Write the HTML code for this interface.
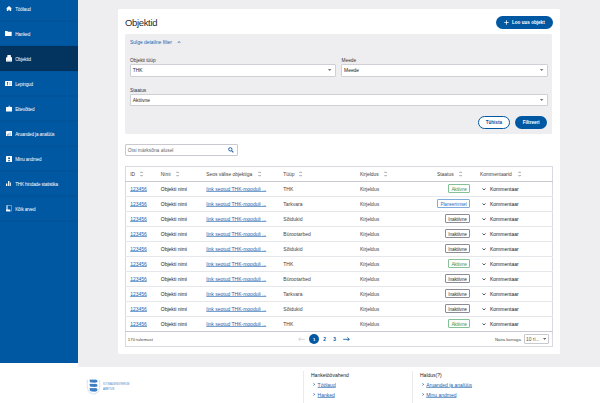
<!DOCTYPE html>
<html><head><meta charset="utf-8"><title>Objektid</title>
<style>
html,body{margin:0;padding:0;}
body{width:600px;height:403px;overflow:hidden;position:relative;background:#fff;font-family:"Liberation Sans",sans-serif;}
.t{position:absolute;white-space:nowrap;}
.b{position:absolute;}
.ic{position:absolute;display:block;}
.ic svg{display:block;}
</style></head><body>
<div class="b" style="left:0px;top:0px;width:77.50px;height:362.50px;background:#0058a3"></div>
<div class="b" style="left:0px;top:46px;width:77.50px;height:25.00px;background:#03345f"></div>
<div class="b" style="left:0px;top:20px;width:77.50px;height:2.00px;background:rgba(0,0,0,0.04)"></div>
<div class="b" style="left:0px;top:45px;width:77.50px;height:2.00px;background:rgba(0,0,0,0.04)"></div>
<div class="b" style="left:0px;top:70px;width:77.50px;height:2.00px;background:rgba(0,0,0,0.04)"></div>
<div class="b" style="left:0px;top:95px;width:77.50px;height:2.00px;background:rgba(0,0,0,0.04)"></div>
<div class="b" style="left:0px;top:120px;width:77.50px;height:2.00px;background:rgba(0,0,0,0.04)"></div>
<div class="b" style="left:0px;top:145px;width:77.50px;height:2.00px;background:rgba(0,0,0,0.04)"></div>
<div class="b" style="left:0px;top:170px;width:77.50px;height:2.00px;background:rgba(0,0,0,0.04)"></div>
<div class="b" style="left:0px;top:195px;width:77.50px;height:2.00px;background:rgba(0,0,0,0.04)"></div>
<div class="b" style="left:0px;top:220px;width:77.50px;height:2.00px;background:rgba(0,0,0,0.04)"></div>
<div class="ic" style="left:5.8px;top:5.8px;width:6.0px;height:5.4px;"><svg width="6" height="5.4" viewBox="0 0 12 11"><path d="M6 0 L12 5.2 L10.4 5.2 L10.4 11 L7.4 11 L7.4 7.6 L4.6 7.6 L4.6 11 L1.6 11 L1.6 5.2 L0 5.2 Z" fill="#ffffff"/></svg></div>
<div class="t " style="left:15.2px;top:4.80px;height:10px;line-height:10px;font-size:4.6px;color:#fff;font-weight:400;letter-spacing:-0.15px">Töölaud</div>
<div class="ic" style="left:5.4px;top:31.0px;width:6.7px;height:4.9px;"><svg width="6.7" height="4.9" viewBox="0 0 13.4 9.8"><path d="M0 0.6 Q0 0 0.6 0 H4.6 L6 1.4 H12.8 Q13.4 1.4 13.4 2 V9.2 Q13.4 9.8 12.8 9.8 H0.6 Q0 9.8 0 9.2 Z" fill="#ffffff"/></svg></div>
<div class="t " style="left:15.2px;top:29.80px;height:10px;line-height:10px;font-size:4.6px;color:#fff;font-weight:400;letter-spacing:-0.15px">Hanked</div>
<div class="ic" style="left:5.8px;top:55.3px;width:6.3px;height:6.6px;"><svg width="6.3" height="6.6" viewBox="0 0 12.6 13.2"><path d="M1.4 4.4 H2.6 V1.2 Q2.6 0 3.8 0 H8.6 Q9.8 0 9.8 1.2 V4.4 H11.2 Q12.6 4.4 12.6 5.8 V13.2 H0 V5.8 Q0 4.4 1.4 4.4 Z" fill="#ffffff"/><path d="M2.2 13.2 V10.4 Q3.6 8.6 5 10.4 V13.2 Z M7.6 13.2 V10.4 Q9 8.6 10.4 10.4 V13.2 Z" fill="#c9d6e6"/></svg></div>
<div class="t " style="left:15.2px;top:54.80px;height:10px;line-height:10px;font-size:4.6px;color:#fff;font-weight:400;letter-spacing:-0.15px">Objektid</div>
<div class="ic" style="left:5.0px;top:80.8px;width:7.4px;height:5.2px;"><svg width="7.4" height="5.2" viewBox="0 0 14.8 10.4"><rect x="0" y="0" width="14.8" height="10.4" rx="0.8" fill="#ffffff"/><circle cx="5" cy="3.6" r="1.5" fill="#0058a3"/><rect x="4.3" y="4.6" width="1.4" height="4" fill="#0058a3"/><rect x="9.2" y="2" width="0.9" height="6.4" fill="#0058a3" opacity="0.5"/><rect x="11.4" y="2" width="0.9" height="6.4" fill="#0058a3" opacity="0.5"/></svg></div>
<div class="t " style="left:15.2px;top:79.80px;height:10px;line-height:10px;font-size:4.6px;color:#fff;font-weight:400;letter-spacing:-0.15px">Lepingud</div>
<div class="ic" style="left:5.5px;top:105.1px;width:6.6px;height:6.6px;"><svg width="6.6" height="6.6" viewBox="0 0 13.2 13.2"><path d="M0.6 4 H12.6 Q13.2 4 13.2 4.6 V12.6 Q13.2 13.2 12.6 13.2 H0.6 Q0 13.2 0 12.6 V4.6 Q0 4 0.6 4 Z" fill="#ffffff"/><path d="M4 4 L6.6 0.4 L9.2 4 Z" fill="#9fbce0"/></svg></div>
<div class="t " style="left:15.2px;top:104.80px;height:10px;line-height:10px;font-size:4.6px;color:#fff;font-weight:400;letter-spacing:-0.15px">Ettevõtted</div>
<div class="ic" style="left:5.8px;top:130.8px;width:6.1px;height:5.7px;"><svg width="6.1" height="5.7" viewBox="0 0 12.2 11.4"><rect x="0" y="0" width="12.2" height="11.4" rx="1" fill="#ffffff"/><rect x="2" y="6.4" width="2" height="3" fill="#6f9bd0"/><rect x="4.8" y="4.4" width="2" height="5" fill="#6f9bd0"/><rect x="7.6" y="2.4" width="2" height="7" fill="#a9c3e3"/></svg></div>
<div class="t " style="left:15.2px;top:129.80px;height:10px;line-height:10px;font-size:4.6px;color:#fff;font-weight:400;letter-spacing:-0.15px">Aruanded ja analüüs</div>
<div class="ic" style="left:5.8px;top:155.5px;width:6.1px;height:6.4px;"><svg width="6.1" height="6.4" viewBox="0 0 12.2 12.8"><rect x="0" y="0" width="12.2" height="12.8" rx="1" fill="#ffffff"/><circle cx="6.1" cy="4.4" r="2" fill="#0058a3"/><path d="M3.4 10.4 Q6.1 5.2 8.8 10.4 Z" fill="#0058a3"/></svg></div>
<div class="t " style="left:15.2px;top:154.80px;height:10px;line-height:10px;font-size:4.6px;color:#fff;font-weight:400;letter-spacing:-0.15px">Minu andmed</div>
<div class="ic" style="left:5.8px;top:180.8px;width:5.6px;height:5.4px;"><svg width="5.6" height="5.4" viewBox="0 0 11.2 10.8"><rect x="0" y="5" width="2.6" height="5.8" fill="#ffffff"/><rect x="4.2" y="0" width="2.6" height="10.8" fill="#ffffff"/><rect x="8.4" y="3" width="2.6" height="7.8" fill="#ffffff"/></svg></div>
<div class="t " style="left:15.2px;top:179.80px;height:10px;line-height:10px;font-size:4.6px;color:#fff;font-weight:400;letter-spacing:-0.15px">THK hindade statistika</div>
<div class="ic" style="left:5.8px;top:205.3px;width:6.1px;height:6.4px;"><svg width="6.1" height="6.4" viewBox="0 0 12.2 12.8"><rect x="0.7" y="0.7" width="10.8" height="11.4" rx="1" stroke="#c3d3e8" stroke-width="1.2" fill="none"/><rect x="1.5" y="1" width="1.6" height="9" fill="#ffffff"/><rect x="0" y="9" width="8.5" height="3.6" rx="1" fill="#ffffff"/></svg></div>
<div class="t " style="left:15.2px;top:204.80px;height:10px;line-height:10px;font-size:4.6px;color:#fff;font-weight:400;letter-spacing:-0.15px">Kõik arved</div>
<div class="b" style="left:77.5px;top:0px;width:522.50px;height:366.50px;background:#eeeef0"></div>
<div class="b" style="left:117.5px;top:9px;width:442.50px;height:344.50px;background:#fff;border-radius:1.5px"></div>
<div class="t " style="left:125.1px;top:16.20px;height:14px;line-height:14px;font-size:9.5px;color:#2a2a2a;font-weight:400;letter-spacing:-0.36px">Objektid</div>
<div class="b" style="left:495.6px;top:16px;width:57.00px;height:12.60px;background:#0058a3;border-radius:7px"></div>
<svg class="ic" style="left:504.2px;top:19.8px" width="5" height="5" viewBox="0 0 10 10"><path d="M5 0.5 V9.5 M0.5 5 H9.5" stroke="#fff" stroke-width="1.5"/></svg>
<div class="t " style="left:512px;top:18.10px;height:10px;line-height:10px;font-size:4.6px;color:#fff;font-weight:700;">Loo uus objekt</div>
<div class="b" style="left:125px;top:34px;width:427.40px;height:99.60px;background:#eeeef0;border-radius:1.5px"></div>
<div class="t " style="left:130px;top:38.00px;height:10px;line-height:10px;font-size:4.95px;color:#1f63ad;font-weight:400;">Sulge detailne filter</div>
<svg class="ic" style="left:177px;top:40.8px" width="4.2" height="2.6" viewBox="0 0 8.4 5.2"><path d="M1 4.3 L4.2 1.2 L7.4 4.3" stroke="#1f63ad" stroke-width="1.6" fill="none"/></svg>
<div class="t " style="left:130px;top:55.80px;height:10px;line-height:10px;font-size:4.8px;color:#333;font-weight:400;">Objekti tüüp</div>
<div class="b" style="left:129.8px;top:63.9px;width:205.90px;height:12.70px;background:#fff;border:0.5px solid #cfd0d6;box-sizing:border-box;border-radius:1px"></div>
<div class="t " style="left:132.8px;top:66.05px;height:10px;line-height:10px;font-size:4.9px;color:#222;font-weight:400;">THK</div>
<svg class="ic" style="left:328.20px;top:69.45px" width="3.4" height="2" viewBox="0 0 5 3"><path d="M0 0 H5 L2.5 3 Z" fill="#6b6b73"/></svg>
<div class="t " style="left:341.5px;top:55.80px;height:10px;line-height:10px;font-size:4.8px;color:#333;font-weight:400;">Meede</div>
<div class="b" style="left:341.1px;top:63.9px;width:206.60px;height:12.70px;background:#fff;border:0.5px solid #cfd0d6;box-sizing:border-box;border-radius:1px"></div>
<div class="t " style="left:344.1px;top:66.05px;height:10px;line-height:10px;font-size:4.9px;color:#222;font-weight:400;">Meede</div>
<svg class="ic" style="left:540.20px;top:69.45px" width="3.4" height="2" viewBox="0 0 5 3"><path d="M0 0 H5 L2.5 3 Z" fill="#6b6b73"/></svg>
<div class="t " style="left:130px;top:85.80px;height:10px;line-height:10px;font-size:4.8px;color:#333;font-weight:400;">Staatus</div>
<div class="b" style="left:129.8px;top:93.6px;width:417.90px;height:12.80px;background:#fff;border:0.5px solid #cfd0d6;box-sizing:border-box;border-radius:1px"></div>
<div class="t " style="left:132.8px;top:95.80px;height:10px;line-height:10px;font-size:4.9px;color:#222;font-weight:400;">Aktiivne</div>
<svg class="ic" style="left:540.20px;top:99.20px" width="3.4" height="2" viewBox="0 0 5 3"><path d="M0 0 H5 L2.5 3 Z" fill="#6b6b73"/></svg>
<div class="b" style="left:477.9px;top:116px;width:31.90px;height:12.60px;background:#fff;border:0.6px solid #0058a3;box-sizing:border-box;border-radius:7px"></div>
<div class="t " style="left:477.9px;top:118.10px;height:10px;line-height:10px;font-size:4.6px;color:#0058a3;font-weight:700;width:31.9px;text-align:center">Tühista</div>
<div class="b" style="left:514.9px;top:116px;width:32.60px;height:12.60px;background:#0058a3;border-radius:7px"></div>
<div class="t " style="left:514.9px;top:118.10px;height:10px;line-height:10px;font-size:4.6px;color:#fff;font-weight:700;width:32.6px;text-align:center">Filtreeri</div>
<div class="b" style="left:125px;top:143.7px;width:112.50px;height:12.40px;background:#fff;border:0.5px solid #c9cad0;box-sizing:border-box;border-radius:1px"></div>
<div class="t " style="left:127.8px;top:145.70px;height:10px;line-height:10px;font-size:4.9px;color:#666;font-weight:400;">Otsi märksõna alusel</div>
<svg class="ic" style="left:228.2px;top:146.8px" width="5.8" height="5.8" viewBox="0 0 10 10"><circle cx="4" cy="4" r="2.9" stroke="#1f63ad" stroke-width="1.7" fill="none"/><path d="M6.1 6.1 L9.2 9.2" stroke="#1f63ad" stroke-width="2"/></svg>
<div class="b" style="left:125px;top:166.2px;width:427.50px;height:180.40px;background:#fff;border:0.5px solid #d9dae0;box-sizing:border-box"></div>
<div class="b" style="left:125px;top:180.9px;width:427.50px;height:0.70px;background:#c8c9d2"></div>
<div class="b" style="left:125px;top:195.89999999999998px;width:427.50px;height:0.60px;background:#e6e7eb"></div>
<div class="b" style="left:125px;top:210.89999999999998px;width:427.50px;height:0.60px;background:#e6e7eb"></div>
<div class="b" style="left:125px;top:225.89999999999998px;width:427.50px;height:0.60px;background:#e6e7eb"></div>
<div class="b" style="left:125px;top:240.89999999999998px;width:427.50px;height:0.60px;background:#e6e7eb"></div>
<div class="b" style="left:125px;top:255.89999999999998px;width:427.50px;height:0.60px;background:#e6e7eb"></div>
<div class="b" style="left:125px;top:270.9px;width:427.50px;height:0.60px;background:#e6e7eb"></div>
<div class="b" style="left:125px;top:285.9px;width:427.50px;height:0.60px;background:#e6e7eb"></div>
<div class="b" style="left:125px;top:300.9px;width:427.50px;height:0.60px;background:#e6e7eb"></div>
<div class="b" style="left:125px;top:315.9px;width:427.50px;height:0.60px;background:#e6e7eb"></div>
<div class="b" style="left:125px;top:330.7px;width:427.50px;height:0.70px;background:#c8c9d2"></div>
<div class="t " style="left:130.2px;top:169.80px;height:10px;line-height:10px;font-size:4.9px;color:#444;font-weight:400;">ID</div>
<svg class="ic" style="left:140.00px;top:171.00px" width="3.2" height="6" viewBox="0 0 6.4 12"><path d="M1 4 L3.2 1.6 L5.4 4 M1 8 L3.2 10.4 L5.4 8" stroke="#666" stroke-width="1.3" fill="none"/></svg>
<div class="t " style="left:160.8px;top:169.80px;height:10px;line-height:10px;font-size:4.9px;color:#444;font-weight:400;">Nimi</div>
<svg class="ic" style="left:176.00px;top:171.00px" width="3.2" height="6" viewBox="0 0 6.4 12"><path d="M1 4 L3.2 1.6 L5.4 4 M1 8 L3.2 10.4 L5.4 8" stroke="#666" stroke-width="1.3" fill="none"/></svg>
<div class="t " style="left:206.2px;top:169.80px;height:10px;line-height:10px;font-size:4.9px;color:#444;font-weight:400;">Seos välise objektiga</div>
<svg class="ic" style="left:257.50px;top:171.00px" width="3.2" height="6" viewBox="0 0 6.4 12"><path d="M1 4 L3.2 1.6 L5.4 4 M1 8 L3.2 10.4 L5.4 8" stroke="#666" stroke-width="1.3" fill="none"/></svg>
<div class="t " style="left:283.3px;top:169.80px;height:10px;line-height:10px;font-size:4.9px;color:#444;font-weight:400;">Tüüp</div>
<svg class="ic" style="left:298.60px;top:171.00px" width="3.2" height="6" viewBox="0 0 6.4 12"><path d="M1 4 L3.2 1.6 L5.4 4 M1 8 L3.2 10.4 L5.4 8" stroke="#666" stroke-width="1.3" fill="none"/></svg>
<div class="t " style="left:360px;top:169.80px;height:10px;line-height:10px;font-size:4.9px;color:#444;font-weight:400;">Kirjeldus</div>
<svg class="ic" style="left:384.20px;top:171.00px" width="3.2" height="6" viewBox="0 0 6.4 12"><path d="M1 4 L3.2 1.6 L5.4 4 M1 8 L3.2 10.4 L5.4 8" stroke="#666" stroke-width="1.3" fill="none"/></svg>
<div class="t " style="left:437px;top:169.80px;height:10px;line-height:10px;font-size:4.9px;color:#444;font-weight:400;">Staatus</div>
<svg class="ic" style="left:459.00px;top:171.00px" width="3.2" height="6" viewBox="0 0 6.4 12"><path d="M1 4 L3.2 1.6 L5.4 4 M1 8 L3.2 10.4 L5.4 8" stroke="#666" stroke-width="1.3" fill="none"/></svg>
<div class="t " style="left:480px;top:169.80px;height:10px;line-height:10px;font-size:4.9px;color:#444;font-weight:400;">Kommentaarid</div>
<svg class="ic" style="left:518.00px;top:171.00px" width="3.2" height="6" viewBox="0 0 6.4 12"><path d="M1 4 L3.2 1.6 L5.4 4 M1 8 L3.2 10.4 L5.4 8" stroke="#666" stroke-width="1.3" fill="none"/></svg>
<div class="t " style="left:130.2px;top:183.90px;height:10px;line-height:10px;font-size:5px;color:#1f63ad;font-weight:400;text-decoration:underline;text-decoration-thickness:0.3px;text-underline-offset:0.3px;text-decoration-color:rgba(31,99,173,0.6)">123456</div>
<div class="t " style="left:160.8px;top:183.90px;height:10px;line-height:10px;font-size:5px;color:#222;font-weight:400;">Objekti nimi</div>
<div class="t " style="left:206.3px;top:183.90px;height:10px;line-height:10px;font-size:5px;color:#1f63ad;font-weight:400;text-decoration:underline;text-decoration-thickness:0.3px;text-underline-offset:0.3px;text-decoration-color:rgba(31,99,173,0.6)">link seotud THK-mooduli ...</div>
<div class="t " style="left:283.3px;top:183.90px;height:10px;line-height:10px;font-size:5px;color:#444;font-weight:400;">THK</div>
<div class="t " style="left:360px;top:183.90px;height:10px;line-height:10px;font-size:5px;color:#444;font-weight:400;">Kirjeldus</div>
<div class="b" style="left:448px;top:184.2px;width:22.00px;height:9.30px;background:#fff;border:0.6px solid #86c096;box-sizing:border-box;border-radius:1px"></div>
<div class="t " style="left:448px;top:184.50px;height:10px;line-height:10px;font-size:4.7px;color:#3f9656;font-weight:400;width:22.00px;text-align:center;letter-spacing:-0.15px">Aktiivne</div>
<svg class="ic" style="left:482px;top:187.60px" width="4" height="2.4" viewBox="0 0 8 5"><path d="M1 1 L4 4 L7 1" stroke="#222" stroke-width="1.8" fill="none"/></svg>
<div class="t " style="left:490px;top:183.90px;height:10px;line-height:10px;font-size:5px;color:#222;font-weight:400;">Kommentaar</div>
<div class="t " style="left:130.2px;top:198.90px;height:10px;line-height:10px;font-size:5px;color:#1f63ad;font-weight:400;text-decoration:underline;text-decoration-thickness:0.3px;text-underline-offset:0.3px;text-decoration-color:rgba(31,99,173,0.6)">123456</div>
<div class="t " style="left:160.8px;top:198.90px;height:10px;line-height:10px;font-size:5px;color:#222;font-weight:400;">Objekti nimi</div>
<div class="t " style="left:206.3px;top:198.90px;height:10px;line-height:10px;font-size:5px;color:#1f63ad;font-weight:400;text-decoration:underline;text-decoration-thickness:0.3px;text-underline-offset:0.3px;text-decoration-color:rgba(31,99,173,0.6)">link seotud THK-mooduli ...</div>
<div class="t " style="left:283.3px;top:198.90px;height:10px;line-height:10px;font-size:5px;color:#444;font-weight:400;">Tarkvara</div>
<div class="t " style="left:360px;top:198.90px;height:10px;line-height:10px;font-size:5px;color:#444;font-weight:400;">Kirjeldus</div>
<div class="b" style="left:437.2px;top:199.2px;width:32.80px;height:9.30px;background:#fff;border:0.6px solid #7fabdc;box-sizing:border-box;border-radius:1px"></div>
<div class="t " style="left:437.2px;top:199.50px;height:10px;line-height:10px;font-size:4.7px;color:#2f78c8;font-weight:400;width:32.80px;text-align:center;letter-spacing:-0.15px">Planeerimisel</div>
<svg class="ic" style="left:482px;top:202.60px" width="4" height="2.4" viewBox="0 0 8 5"><path d="M1 1 L4 4 L7 1" stroke="#222" stroke-width="1.8" fill="none"/></svg>
<div class="t " style="left:490px;top:198.90px;height:10px;line-height:10px;font-size:5px;color:#222;font-weight:400;">Kommentaar</div>
<div class="t " style="left:130.2px;top:213.90px;height:10px;line-height:10px;font-size:5px;color:#1f63ad;font-weight:400;text-decoration:underline;text-decoration-thickness:0.3px;text-underline-offset:0.3px;text-decoration-color:rgba(31,99,173,0.6)">123456</div>
<div class="t " style="left:160.8px;top:213.90px;height:10px;line-height:10px;font-size:5px;color:#222;font-weight:400;">Objekti nimi</div>
<div class="t " style="left:206.3px;top:213.90px;height:10px;line-height:10px;font-size:5px;color:#1f63ad;font-weight:400;text-decoration:underline;text-decoration-thickness:0.3px;text-underline-offset:0.3px;text-decoration-color:rgba(31,99,173,0.6)">link seotud THK-mooduli ...</div>
<div class="t " style="left:283.3px;top:213.90px;height:10px;line-height:10px;font-size:5px;color:#444;font-weight:400;">Sõidukid</div>
<div class="t " style="left:360px;top:213.90px;height:10px;line-height:10px;font-size:5px;color:#444;font-weight:400;">Kirjeldus</div>
<div class="b" style="left:445px;top:214.2px;width:25.00px;height:9.30px;background:#fff;border:0.6px solid #8c8c98;box-sizing:border-box;border-radius:1px"></div>
<div class="t " style="left:445px;top:214.50px;height:10px;line-height:10px;font-size:4.7px;color:#333;font-weight:400;width:25.00px;text-align:center;letter-spacing:-0.15px">Inaktiivne</div>
<svg class="ic" style="left:482px;top:217.60px" width="4" height="2.4" viewBox="0 0 8 5"><path d="M1 1 L4 4 L7 1" stroke="#222" stroke-width="1.8" fill="none"/></svg>
<div class="t " style="left:490px;top:213.90px;height:10px;line-height:10px;font-size:5px;color:#222;font-weight:400;">Kommentaar</div>
<div class="t " style="left:130.2px;top:228.90px;height:10px;line-height:10px;font-size:5px;color:#1f63ad;font-weight:400;text-decoration:underline;text-decoration-thickness:0.3px;text-underline-offset:0.3px;text-decoration-color:rgba(31,99,173,0.6)">123456</div>
<div class="t " style="left:160.8px;top:228.90px;height:10px;line-height:10px;font-size:5px;color:#222;font-weight:400;">Objekti nimi</div>
<div class="t " style="left:206.3px;top:228.90px;height:10px;line-height:10px;font-size:5px;color:#1f63ad;font-weight:400;text-decoration:underline;text-decoration-thickness:0.3px;text-underline-offset:0.3px;text-decoration-color:rgba(31,99,173,0.6)">link seotud THK-mooduli ...</div>
<div class="t " style="left:283.3px;top:228.90px;height:10px;line-height:10px;font-size:5px;color:#444;font-weight:400;">Bürootarbed</div>
<div class="t " style="left:360px;top:228.90px;height:10px;line-height:10px;font-size:5px;color:#444;font-weight:400;">Kirjeldus</div>
<div class="b" style="left:445px;top:229.2px;width:25.00px;height:9.30px;background:#fff;border:0.6px solid #8c8c98;box-sizing:border-box;border-radius:1px"></div>
<div class="t " style="left:445px;top:229.50px;height:10px;line-height:10px;font-size:4.7px;color:#333;font-weight:400;width:25.00px;text-align:center;letter-spacing:-0.15px">Inaktiivne</div>
<svg class="ic" style="left:482px;top:232.60px" width="4" height="2.4" viewBox="0 0 8 5"><path d="M1 1 L4 4 L7 1" stroke="#222" stroke-width="1.8" fill="none"/></svg>
<div class="t " style="left:490px;top:228.90px;height:10px;line-height:10px;font-size:5px;color:#222;font-weight:400;">Kommentaar</div>
<div class="t " style="left:130.2px;top:243.90px;height:10px;line-height:10px;font-size:5px;color:#1f63ad;font-weight:400;text-decoration:underline;text-decoration-thickness:0.3px;text-underline-offset:0.3px;text-decoration-color:rgba(31,99,173,0.6)">123456</div>
<div class="t " style="left:160.8px;top:243.90px;height:10px;line-height:10px;font-size:5px;color:#222;font-weight:400;">Objekti nimi</div>
<div class="t " style="left:206.3px;top:243.90px;height:10px;line-height:10px;font-size:5px;color:#1f63ad;font-weight:400;text-decoration:underline;text-decoration-thickness:0.3px;text-underline-offset:0.3px;text-decoration-color:rgba(31,99,173,0.6)">link seotud THK-mooduli ...</div>
<div class="t " style="left:283.3px;top:243.90px;height:10px;line-height:10px;font-size:5px;color:#444;font-weight:400;">Sõidukid</div>
<div class="t " style="left:360px;top:243.90px;height:10px;line-height:10px;font-size:5px;color:#444;font-weight:400;">Kirjeldus</div>
<div class="b" style="left:445px;top:244.2px;width:25.00px;height:9.30px;background:#fff;border:0.6px solid #8c8c98;box-sizing:border-box;border-radius:1px"></div>
<div class="t " style="left:445px;top:244.50px;height:10px;line-height:10px;font-size:4.7px;color:#333;font-weight:400;width:25.00px;text-align:center;letter-spacing:-0.15px">Inaktiivne</div>
<svg class="ic" style="left:482px;top:247.60px" width="4" height="2.4" viewBox="0 0 8 5"><path d="M1 1 L4 4 L7 1" stroke="#222" stroke-width="1.8" fill="none"/></svg>
<div class="t " style="left:490px;top:243.90px;height:10px;line-height:10px;font-size:5px;color:#222;font-weight:400;">Kommentaar</div>
<div class="t " style="left:130.2px;top:258.90px;height:10px;line-height:10px;font-size:5px;color:#1f63ad;font-weight:400;text-decoration:underline;text-decoration-thickness:0.3px;text-underline-offset:0.3px;text-decoration-color:rgba(31,99,173,0.6)">123456</div>
<div class="t " style="left:160.8px;top:258.90px;height:10px;line-height:10px;font-size:5px;color:#222;font-weight:400;">Objekti nimi</div>
<div class="t " style="left:206.3px;top:258.90px;height:10px;line-height:10px;font-size:5px;color:#1f63ad;font-weight:400;text-decoration:underline;text-decoration-thickness:0.3px;text-underline-offset:0.3px;text-decoration-color:rgba(31,99,173,0.6)">link seotud THK-mooduli ...</div>
<div class="t " style="left:283.3px;top:258.90px;height:10px;line-height:10px;font-size:5px;color:#444;font-weight:400;">THK</div>
<div class="t " style="left:360px;top:258.90px;height:10px;line-height:10px;font-size:5px;color:#444;font-weight:400;">Kirjeldus</div>
<div class="b" style="left:448px;top:259.20000000000005px;width:22.00px;height:9.30px;background:#fff;border:0.6px solid #86c096;box-sizing:border-box;border-radius:1px"></div>
<div class="t " style="left:448px;top:259.50px;height:10px;line-height:10px;font-size:4.7px;color:#3f9656;font-weight:400;width:22.00px;text-align:center;letter-spacing:-0.15px">Aktiivne</div>
<svg class="ic" style="left:482px;top:262.60px" width="4" height="2.4" viewBox="0 0 8 5"><path d="M1 1 L4 4 L7 1" stroke="#222" stroke-width="1.8" fill="none"/></svg>
<div class="t " style="left:490px;top:258.90px;height:10px;line-height:10px;font-size:5px;color:#222;font-weight:400;">Kommentaar</div>
<div class="t " style="left:130.2px;top:273.90px;height:10px;line-height:10px;font-size:5px;color:#1f63ad;font-weight:400;text-decoration:underline;text-decoration-thickness:0.3px;text-underline-offset:0.3px;text-decoration-color:rgba(31,99,173,0.6)">123456</div>
<div class="t " style="left:160.8px;top:273.90px;height:10px;line-height:10px;font-size:5px;color:#222;font-weight:400;">Objekti nimi</div>
<div class="t " style="left:206.3px;top:273.90px;height:10px;line-height:10px;font-size:5px;color:#1f63ad;font-weight:400;text-decoration:underline;text-decoration-thickness:0.3px;text-underline-offset:0.3px;text-decoration-color:rgba(31,99,173,0.6)">link seotud THK-mooduli ...</div>
<div class="t " style="left:283.3px;top:273.90px;height:10px;line-height:10px;font-size:5px;color:#444;font-weight:400;">Bürootarbed</div>
<div class="t " style="left:360px;top:273.90px;height:10px;line-height:10px;font-size:5px;color:#444;font-weight:400;">Kirjeldus</div>
<div class="b" style="left:445px;top:274.20000000000005px;width:25.00px;height:9.30px;background:#fff;border:0.6px solid #8c8c98;box-sizing:border-box;border-radius:1px"></div>
<div class="t " style="left:445px;top:274.50px;height:10px;line-height:10px;font-size:4.7px;color:#333;font-weight:400;width:25.00px;text-align:center;letter-spacing:-0.15px">Inaktiivne</div>
<svg class="ic" style="left:482px;top:277.60px" width="4" height="2.4" viewBox="0 0 8 5"><path d="M1 1 L4 4 L7 1" stroke="#222" stroke-width="1.8" fill="none"/></svg>
<div class="t " style="left:490px;top:273.90px;height:10px;line-height:10px;font-size:5px;color:#222;font-weight:400;">Kommentaar</div>
<div class="t " style="left:130.2px;top:288.90px;height:10px;line-height:10px;font-size:5px;color:#1f63ad;font-weight:400;text-decoration:underline;text-decoration-thickness:0.3px;text-underline-offset:0.3px;text-decoration-color:rgba(31,99,173,0.6)">123456</div>
<div class="t " style="left:160.8px;top:288.90px;height:10px;line-height:10px;font-size:5px;color:#222;font-weight:400;">Objekti nimi</div>
<div class="t " style="left:206.3px;top:288.90px;height:10px;line-height:10px;font-size:5px;color:#1f63ad;font-weight:400;text-decoration:underline;text-decoration-thickness:0.3px;text-underline-offset:0.3px;text-decoration-color:rgba(31,99,173,0.6)">link seotud THK-mooduli ...</div>
<div class="t " style="left:283.3px;top:288.90px;height:10px;line-height:10px;font-size:5px;color:#444;font-weight:400;">Tarkvara</div>
<div class="t " style="left:360px;top:288.90px;height:10px;line-height:10px;font-size:5px;color:#444;font-weight:400;">Kirjeldus</div>
<div class="b" style="left:445px;top:289.20000000000005px;width:25.00px;height:9.30px;background:#fff;border:0.6px solid #8c8c98;box-sizing:border-box;border-radius:1px"></div>
<div class="t " style="left:445px;top:289.50px;height:10px;line-height:10px;font-size:4.7px;color:#333;font-weight:400;width:25.00px;text-align:center;letter-spacing:-0.15px">Inaktiivne</div>
<svg class="ic" style="left:482px;top:292.60px" width="4" height="2.4" viewBox="0 0 8 5"><path d="M1 1 L4 4 L7 1" stroke="#222" stroke-width="1.8" fill="none"/></svg>
<div class="t " style="left:490px;top:288.90px;height:10px;line-height:10px;font-size:5px;color:#222;font-weight:400;">Kommentaar</div>
<div class="t " style="left:130.2px;top:303.90px;height:10px;line-height:10px;font-size:5px;color:#1f63ad;font-weight:400;text-decoration:underline;text-decoration-thickness:0.3px;text-underline-offset:0.3px;text-decoration-color:rgba(31,99,173,0.6)">123456</div>
<div class="t " style="left:160.8px;top:303.90px;height:10px;line-height:10px;font-size:5px;color:#222;font-weight:400;">Objekti nimi</div>
<div class="t " style="left:206.3px;top:303.90px;height:10px;line-height:10px;font-size:5px;color:#1f63ad;font-weight:400;text-decoration:underline;text-decoration-thickness:0.3px;text-underline-offset:0.3px;text-decoration-color:rgba(31,99,173,0.6)">link seotud THK-mooduli ...</div>
<div class="t " style="left:283.3px;top:303.90px;height:10px;line-height:10px;font-size:5px;color:#444;font-weight:400;">Sõidukid</div>
<div class="t " style="left:360px;top:303.90px;height:10px;line-height:10px;font-size:5px;color:#444;font-weight:400;">Kirjeldus</div>
<div class="b" style="left:445px;top:304.20000000000005px;width:25.00px;height:9.30px;background:#fff;border:0.6px solid #8c8c98;box-sizing:border-box;border-radius:1px"></div>
<div class="t " style="left:445px;top:304.50px;height:10px;line-height:10px;font-size:4.7px;color:#333;font-weight:400;width:25.00px;text-align:center;letter-spacing:-0.15px">Inaktiivne</div>
<svg class="ic" style="left:482px;top:307.60px" width="4" height="2.4" viewBox="0 0 8 5"><path d="M1 1 L4 4 L7 1" stroke="#222" stroke-width="1.8" fill="none"/></svg>
<div class="t " style="left:490px;top:303.90px;height:10px;line-height:10px;font-size:5px;color:#222;font-weight:400;">Kommentaar</div>
<div class="t " style="left:130.2px;top:318.90px;height:10px;line-height:10px;font-size:5px;color:#1f63ad;font-weight:400;text-decoration:underline;text-decoration-thickness:0.3px;text-underline-offset:0.3px;text-decoration-color:rgba(31,99,173,0.6)">123456</div>
<div class="t " style="left:160.8px;top:318.90px;height:10px;line-height:10px;font-size:5px;color:#222;font-weight:400;">Objekti nimi</div>
<div class="t " style="left:206.3px;top:318.90px;height:10px;line-height:10px;font-size:5px;color:#1f63ad;font-weight:400;text-decoration:underline;text-decoration-thickness:0.3px;text-underline-offset:0.3px;text-decoration-color:rgba(31,99,173,0.6)">link seotud THK-mooduli ...</div>
<div class="t " style="left:283.3px;top:318.90px;height:10px;line-height:10px;font-size:5px;color:#444;font-weight:400;">THK</div>
<div class="t " style="left:360px;top:318.90px;height:10px;line-height:10px;font-size:5px;color:#444;font-weight:400;">Kirjeldus</div>
<div class="b" style="left:448px;top:319.20000000000005px;width:22.00px;height:9.30px;background:#fff;border:0.6px solid #86c096;box-sizing:border-box;border-radius:1px"></div>
<div class="t " style="left:448px;top:319.50px;height:10px;line-height:10px;font-size:4.7px;color:#3f9656;font-weight:400;width:22.00px;text-align:center;letter-spacing:-0.15px">Aktiivne</div>
<svg class="ic" style="left:482px;top:322.60px" width="4" height="2.4" viewBox="0 0 8 5"><path d="M1 1 L4 4 L7 1" stroke="#222" stroke-width="1.8" fill="none"/></svg>
<div class="t " style="left:490px;top:318.90px;height:10px;line-height:10px;font-size:5px;color:#222;font-weight:400;">Kommentaar</div>
<div class="t " style="left:127.8px;top:334.80px;height:10px;line-height:10px;font-size:4.4px;color:#444;font-weight:400;">170 tulemust</div>
<svg class="ic" style="left:298.4px;top:336.6px" width="7" height="4.6" viewBox="0 0 14 9"><path d="M13.5 4.5 H1.5 M5.4 0.8 L1.4 4.5 L5.4 8.2" stroke="#c4c5cc" stroke-width="1.5" fill="none"/></svg>
<div class="b" style="left:309.3px;top:334px;width:10px;height:10px;border-radius:50%;background:#0058a3"></div>
<div class="t " style="left:309.3px;top:334.80px;height:10px;line-height:10px;font-size:4.4px;color:#fff;font-weight:700;width:10px;text-align:center">1</div>
<div class="t " style="left:323.2px;top:334.80px;height:10px;line-height:10px;font-size:4.8px;color:#0058a3;font-weight:700;width:3px;text-align:center">2</div>
<div class="t " style="left:333.2px;top:334.80px;height:10px;line-height:10px;font-size:4.8px;color:#0058a3;font-weight:700;width:3px;text-align:center">3</div>
<svg class="ic" style="left:343.3px;top:336.6px" width="7" height="4.6" viewBox="0 0 14 9"><path d="M0.5 4.5 H12.5 M8.6 0.8 L12.6 4.5 L8.6 8.2" stroke="#0058a3" stroke-width="1.7" fill="none"/></svg>
<div class="t " style="left:495px;top:335.00px;height:10px;line-height:10px;font-size:4.3px;color:#444;font-weight:400;">Näita korraga</div>
<div class="b" style="left:524.2px;top:334.4px;width:25.20px;height:9.60px;background:#fff;border:0.5px solid #c9cad0;box-sizing:border-box;border-radius:1px"></div>
<div class="t " style="left:526px;top:335.00px;height:10px;line-height:10px;font-size:4.9px;color:#555;font-weight:400;">10 ri...</div>
<svg class="ic" style="left:542.8px;top:338.4px" width="3.2" height="1.9" viewBox="0 0 5 3"><path d="M0 0 H5 L2.5 3 Z" fill="#6b6b73"/></svg>
<svg class="ic" style="left:85.5px;top:378px" width="15" height="16.5" viewBox="0 0 30 33"><path d="M3 4 Q1 17 5 26 Q9 31.5 15 32 Q21 31.5 25 26 Q29 17 27 4" stroke="#c8d8ee" stroke-width="2.2" fill="none" stroke-dasharray="2.2 1.2"/><path d="M7 3.5 Q8 2 10 3.5 Q13 2.5 15 3.5 Q19 2.5 22 4 L23 6.5 L22.5 8.5 Q18 10 14 9 Q10 9.5 8 8.5 Z" fill="#3f7dc3"/><path d="M7 12 Q8 10.5 10 12 Q13 11 15 12 Q19 11 22 12.5 L23 15 L22.5 17 Q18 18.5 14 17.5 Q10 18 8 17 Z" fill="#3f7dc3"/><path d="M7 20.5 Q8 19 10 20.5 Q13 19.5 15 20.5 Q19 19.5 22 21 L23 23.5 L22 26 Q18 28 14 27 Q10 27.5 8 25.5 Z" fill="#3f7dc3"/></svg>
<svg class="ic" style="left:102.5px;top:381px" width="27" height="10" viewBox="0 0 27 10"><text x="0" y="3.9" font-family="Liberation Sans" font-size="3.8" fill="#5585c4" textLength="26.4" lengthAdjust="spacingAndGlyphs">SOTSIAALMINISTEERIUM</text><text x="0" y="8.8" font-family="Liberation Sans" font-size="3.8" fill="#4a7cc0" textLength="11.4" lengthAdjust="spacingAndGlyphs">AMETUS</text></svg>
<div class="b" style="left:303px;top:371.3px;width:0.60px;height:31.70px;background:#ebebee"></div>
<div class="b" style="left:412.2px;top:371.3px;width:0.60px;height:31.70px;background:#ebebee"></div>
<div class="t " style="left:311px;top:370.00px;height:10px;line-height:10px;font-size:5.0px;color:#222;font-weight:400;">Hanketöövahend</div>
<div class="t " style="left:420px;top:370.00px;height:10px;line-height:10px;font-size:5.0px;color:#222;font-weight:400;">Haldus(?)</div>
<svg class="ic" style="left:313.40px;top:383.40px" width="2.2" height="2.8" viewBox="0 0 4.4 5.6"><path d="M1 0.8 L3.4 2.8 L1 4.8" stroke="#1f63ad" stroke-width="1.7" fill="none"/></svg>
<div class="t " style="left:317.6px;top:380.10px;height:10px;line-height:10px;font-size:5.0px;color:#1f63ad;font-weight:400;text-decoration:underline;text-decoration-thickness:0.3px;text-underline-offset:0.3px;text-decoration-color:rgba(31,99,173,0.6)">Töölaud</div>
<svg class="ic" style="left:313.40px;top:393.20px" width="2.2" height="2.8" viewBox="0 0 4.4 5.6"><path d="M1 0.8 L3.4 2.8 L1 4.8" stroke="#1f63ad" stroke-width="1.7" fill="none"/></svg>
<div class="t " style="left:317.6px;top:389.90px;height:10px;line-height:10px;font-size:5.0px;color:#1f63ad;font-weight:400;text-decoration:underline;text-decoration-thickness:0.3px;text-underline-offset:0.3px;text-decoration-color:rgba(31,99,173,0.6)">Hanked</div>
<svg class="ic" style="left:422.00px;top:383.40px" width="2.2" height="2.8" viewBox="0 0 4.4 5.6"><path d="M1 0.8 L3.4 2.8 L1 4.8" stroke="#1f63ad" stroke-width="1.7" fill="none"/></svg>
<div class="t " style="left:426.2px;top:380.10px;height:10px;line-height:10px;font-size:5.0px;color:#1f63ad;font-weight:400;text-decoration:underline;text-decoration-thickness:0.3px;text-underline-offset:0.3px;text-decoration-color:rgba(31,99,173,0.6)">Aruanded ja analüüs</div>
<svg class="ic" style="left:422.00px;top:393.20px" width="2.2" height="2.8" viewBox="0 0 4.4 5.6"><path d="M1 0.8 L3.4 2.8 L1 4.8" stroke="#1f63ad" stroke-width="1.7" fill="none"/></svg>
<div class="t " style="left:426.2px;top:389.90px;height:10px;line-height:10px;font-size:5.0px;color:#1f63ad;font-weight:400;text-decoration:underline;text-decoration-thickness:0.3px;text-underline-offset:0.3px;text-decoration-color:rgba(31,99,173,0.6)">Minu andmed</div>
</body></html>
